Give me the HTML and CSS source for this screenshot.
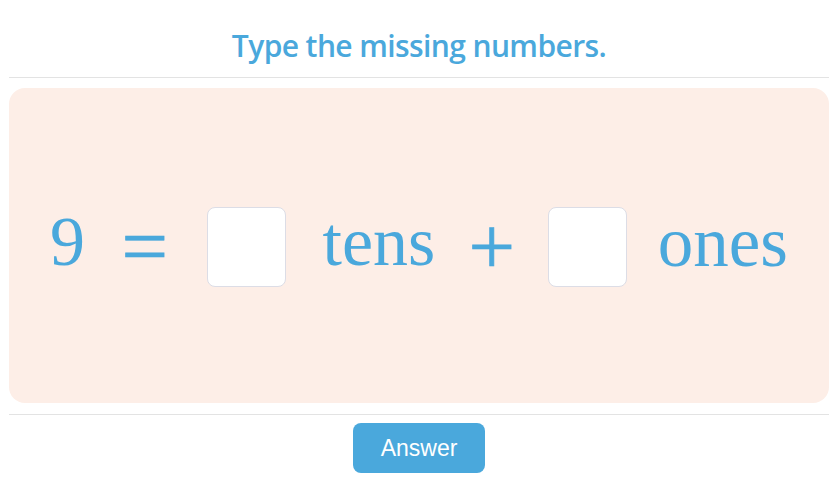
FILE: index.html
```html
<!DOCTYPE html>
<html>
<head>
<meta charset="utf-8">
<link rel="stylesheet" href="styles.css">
</head>
<body>
<div class="page">
  <div class="title">Type the missing numbers.</div>
  <div class="panel">
    <div class="equation">
      <span class="tok num">9</span>
      <span class="op eq">=</span>
      <span class="box first"></span>
      <span class="tok tens">tens</span>
      <span class="op plus">+</span>
      <span class="box second"></span>
      <span class="tok ones">ones</span>
    </div>
  </div>
  <div class="footer">
    <button class="answer">Answer</button>
  </div>
</div>
</body>
</html>
```
FILE: styles.css
```css
html, body {
  margin: 0;
  padding: 0;
  background: #ffffff;
}
.page {
  width: 820px;
  margin: 0 9px;
}
.title {
  height: 78px;
  border-bottom: 1px solid #e3e3e3;
  box-sizing: border-box;
  display: flex;
  align-items: center;
  justify-content: center;
  padding-top: 14px;
  font-family: "Open Sans", sans-serif;
  font-size: 30px;
  font-weight: 600;
  letter-spacing: -0.6px;
  color: #4aa8dc;
}
.panel {
  margin-top: 10px;
  height: 315px;
  background: #fdeee7;
  border-radius: 16px;
  display: flex;
  align-items: center;
  justify-content: center;
}
.equation {
  display: flex;
  align-items: center;
  font-family: "Liberation Serif", "Times New Roman", serif;
  font-size: 70px;
  color: #4aa8dc;
  margin-top: 3px;
}
.tok {
  line-height: 1;
  margin-bottom: 10px;
}
.op {
  line-height: 1;
  -webkit-text-stroke: 0.6px #4aa8dc;
  transform: scale(1.18);
}
.eq { margin-left: 40px; }
.first { margin-left: 42px; }
.tens { margin-left: 37px; }
.plus { margin-left: 37px; }
.second { margin-left: 36px; }
.ones { margin-left: 31px; font-size: 71px; }
.box {
  width: 77px;
  height: 78px;
  background: #ffffff;
  border: 1px solid #dcdde6;
  border-radius: 8px;
}
.footer {
  margin-top: 11px;
  border-top: 1px solid #e3e3e3;
  display: flex;
  justify-content: center;
  padding-top: 8px;
}
.answer {
  width: 132px;
  height: 50px;
  border: none;
  border-radius: 8px;
  background: #4aa8dc;
  color: #ffffff;
  font-family: "Liberation Sans", Arial, sans-serif;
  font-size: 23px;
  padding: 0;
}
```
